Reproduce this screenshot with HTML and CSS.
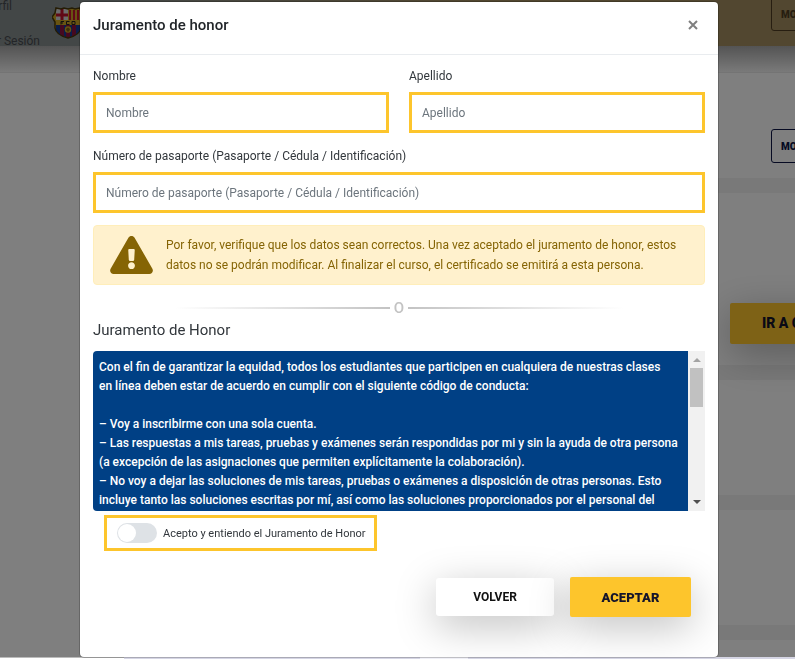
FILE: index.html
```
<!DOCTYPE html>
<html lang="es">
<head>
    <meta charset="UTF-8">
    <meta name="viewport" content="width=device-width, initial-scale=1.0">
    <title>Juramento de honor</title>
    <link rel="stylesheet" href="styles.css">
</head>
<body>
<div class="page">
    <header class="topbar">
        <nav class="topbar-menu">
            <a href="#">Perfil</a>
            <a href="#">Cerrar Sesión</a>
        </nav>
        <svg class="crest" viewBox="0 0 32 32" aria-hidden="true">
            <defs>
                <clipPath id="shield">
                    <path d="M4 1 L9 2 L12 1 L16 2 L20 1 L23 2 L28 1 L29 6 L32 10 L29 15 V21 Q28 28 16 31 Q4 28 3 21 V15 L0 10 L3 6 Z"/>
                </clipPath>
            </defs>
            <g clip-path="url(#shield)">
                <rect width="32" height="32" fill="#d0a824"/>
                <rect x="4" y="2" width="12" height="11" fill="#d8d8d8"/>
                <path d="M8.500 2h3v11h-3zM4 6.500h12v3H4z" fill="#c2122e"/>
                <path d="M17 3h2v10h-2zM21 3h2v10h-2zM25 3h2v10h-2z" fill="#c2122e"/>
                <rect x="4" y="18" width="24" height="13" fill="#143a94"/>
                <path d="M8 18h4v13H8zM14 18h4v13h-4zM20 18h4v13h-4z" fill="#8c1240"/>
                <path d="M9 17.500V14.500h3M9 16h2M17.500 14.500h-3v3h3M20 14.500h3v3h-3z" fill="none" stroke="#222"/>
                <circle cx="16" cy="22.500" r="3.200" fill="#d0a824"/>
                <path d="M16 20.500l2 1.500-1 2.500h-2l-1-2.500z" fill="#7a5c10"/>
            </g>
            <path d="M4 1 L9 2 L12 1 L16 2 L20 1 L23 2 L28 1 L29 6 L32 10 L29 15 V21 Q28 28 16 31 Q4 28 3 21 V15 L0 10 L3 6 Z" fill="none" stroke="#4a3808" stroke-width="1.500"/>
        </svg>
        <button class="outline-btn outline-btn-top" type="button">MOSTRAR</button>
    </header>
    <main class="courses">
        <section class="course course-first">
            <button class="outline-btn" type="button">MOSTRAR</button>
        </section>
        <section class="course course-action">
            <a class="go-btn" href="#">IR A CURSO</a>
        </section>
        <section class="course"></section>
        <section class="course"></section>
        <section class="course"></section>
    </main>
</div>

<div class="backdrop">
    <form class="modal" role="dialog" aria-labelledby="modal-title">
        <div class="modal-header">
            <h1 class="modal-title" id="modal-title">Juramento de honor</h1>
            <button class="close" type="button" aria-label="Cerrar">
                <svg viewBox="0 0 10 10"><path d="M1 1l8 8M9 1l-8 8"/></svg>
            </button>
        </div>
        <div class="modal-body">
            <div class="row">
                <div class="field">
                    <label for="nombre">Nombre</label>
                    <input type="text" id="nombre" placeholder="Nombre">
                </div>
                <div class="field">
                    <label for="apellido">Apellido</label>
                    <input type="text" id="apellido" placeholder="Apellido">
                </div>
            </div>
            <div class="field field-last">
                <label for="pasaporte">Número de pasaporte (Pasaporte / Cédula / Identificación)</label>
                <input type="text" id="pasaporte" placeholder="Número de pasaporte (Pasaporte / Cédula / Identificación)">
            </div>
            <div class="alert">
                <svg class="alert-icon" viewBox="0 0 576 512" aria-hidden="true">
                    <path d="M569.500 440C588 472 564.800 512 527.900 512H48.100c-36.900 0-60-40.100-41.600-72L246.400 24c18.500-32 64.700-32 83.200 0l239.900 416zM288 354c-25.400 0-46 20.600-46 46s20.600 46 46 46 46-20.600 46-46-20.600-46-46-46zm-43.700-165.300l7.400 136c.4 6.400 5.600 11.300 12 11.300h48.500c6.400 0 11.600-5 12-11.300l7.400-136c.4-6.900-5.100-12.700-12-12.700h-63.400c-6.900 0-12.300 5.800-11.900 12.700z"/>
                </svg>
                <p>Por favor, verifique que los datos sean correctos. Una vez aceptado el juramento de honor, estos datos no se podrán modificar. Al finalizar el curso, el certificado se emitirá a esta persona.</p>
            </div>
            <div class="divider"><span>O</span></div>
            <h2 class="oath-title">Juramento de Honor</h2>
            <div class="oath">
                <div class="oath-text">
                    Con el fin de garantizar la equidad, todos los estudiantes que participen en cualquiera de nuestras clases<br>
                    en línea deben estar de acuerdo en cumplir con el siguiente código de conducta:<br><br>
                    – Voy a inscribirme con una sola cuenta.<br>
                    – Las respuestas a mis tareas, pruebas y exámenes serán respondidas por mi y sin la ayuda de otra persona<br>
                    (a excepción de las asignaciones que permiten explícitamente la colaboración).<br>
                    – No voy a dejar las soluciones de mis tareas, pruebas o exámenes a disposición de otras personas. Esto<br>
                    incluye tanto las soluciones escritas por mí, así como las soluciones proporcionados por el personal del
                </div>
                <div class="scrollbar" aria-hidden="true">
                    <span class="arrow arrow-up"></span>
                    <span class="thumb"></span>
                    <span class="arrow arrow-down"></span>
                </div>
            </div>
            <label class="accept">
                <input type="checkbox" class="switch">
                Acepto y entiendo el Juramento de Honor
            </label>
            <div class="actions">
                <button class="btn btn-back" type="button">VOLVER</button>
                <button class="btn btn-accept" type="submit">ACEPTAR</button>
            </div>
        </div>
    </form>
</div>
<div class="taskbar">
    <span class="taskbar-status"></span>
    <span class="taskbar-tab"></span>
</div>
</body>
</html>
```

FILE: styles.css
```
* {
    box-sizing: border-box;
}

body {
    margin: 0;
    height: 100vh;
    overflow: hidden;
    font-family: Roboto, "Liberation Sans", sans-serif;
    font-size: 12px;
    color: #32373c;
    display: flex;
    flex-direction: column;
}

h1, h2, p {
    margin: 0;
    font-weight: 400;
}

button, input {
    font-family: inherit;
}

/* page behind the modal */
.page {
    flex: 1;
    min-height: 0;
    overflow: hidden;
    background: #fff;
}

.topbar {
    display: flex;
    height: 46px;
    background: linear-gradient(90deg, #868e8e 0, #868e8e 100px, #a48f60 60%, #a48f60);
}

.topbar-menu {
    width: 52px;
    display: flex;
    flex-direction: column;
    align-items: flex-end;
    gap: 15px;
    padding-right: 12px;
}

.topbar-menu a {
    color: #474b50;
    line-height: 20px;
    white-space: nowrap;
    text-decoration: none;
}

.topbar-menu a:first-child {
    margin-top: -4px;
    padding-right: 28px;
}

.crest {
    width: 32px;
    height: 32px;
    margin-top: 7px;
}

.outline-btn {
    width: 80px;
    height: 34px;
    margin-left: auto;
    margin-right: -56px;
    padding: 0 9px;
    border: 1px solid #0c1445;
    border-radius: 3px;
    background: none;
    color: #0c1445;
    font-size: 10px;
    font-weight: 900;
    text-align: left;
    flex-shrink: 0;
}

.outline-btn-top {
    margin-top: -3px;
    border-color: #4f3d22;
    color: #4f3d22;
}

.courses {
    background: linear-gradient(#a8a8a8, #f4f4f4 26px, #e8e8e8 26px, #e8e8e8 27px, #fff 27px);
}

.course {
    display: flex;
    height: 130px;
    margin-left: 50%;
    border-bottom: 15px solid #f3f3f3;
}

.course-first {
    height: 147px;
    padding-top: 83px;
}

.course-action {
    height: 187px;
    padding-top: 110px;
}

.go-btn {
    width: 130px;
    height: 41px;
    margin-left: auto;
    margin-right: -65px;
    padding-left: 32px;
    background: #fdc52c;
    border-radius: 2px;
    box-shadow: 0 10px 40px rgba(0, 0, 0, .3);
    color: #15152b;
    font-size: 14px;
    font-weight: 900;
    line-height: 41px;
    text-decoration: none;
    white-space: nowrap;
}

.taskbar {
    display: flex;
    height: 2px;
    background: #d5d5e4;
}

.taskbar-status {
    width: 124px;
    background: #fff;
    border-top: 1px solid #bbb;
}

.taskbar-tab {
    width: 48px;
    margin-left: 296px;
    background: #efeff6;
}

/* modal */
.backdrop {
    position: fixed;
    inset: 0 0 2px;
    padding: 2px 77px 0 80px;
    background: rgba(0, 0, 0, .5);
}

.modal {
    background: #fff;
    border-radius: 4px;
    box-shadow: 0 0 0 1px rgba(0, 0, 0, .2);
    overflow: hidden;
}

.modal-header {
    display: flex;
    justify-content: space-between;
    align-items: center;
    height: 53px;
    padding: 0 18px 6px 13px;
    border-bottom: 1px solid #e9ecef;
}

.modal-title {
    font-size: 15px;
    font-weight: 500;
    line-height: 22px;
    color: #212529;
}

.close {
    width: 14px;
    height: 14px;
    padding: 2px;
    border: 0;
    background: none;
    display: flex;
}

.close svg {
    width: 10px;
    height: 10px;
    stroke: #7f7f7f;
    stroke-width: 2;
}

.modal-body {
    padding: 11px 13px 40px;
}

.row {
    display: flex;
    gap: 20px;
}

.field {
    flex: 1;
    margin-bottom: 13px;
}

.field-last {
    margin-bottom: 12px;
}

.field label {
    display: block;
    margin-bottom: 6px;
    line-height: 20px;
}

.field input {
    display: block;
    width: 100%;
    height: 41px;
    padding: 0 10px;
    border: 3px solid #fdc52c;
    background: #fff;
    font-size: 12px;
    color: #495057;
}

.field input::placeholder {
    color: #6c757d;
}

.alert {
    display: flex;
    align-items: center;
    gap: 13px;
    padding: 9px 16px;
    border: 1px solid #ffeeba;
    border-radius: 4px;
    background: #fff1cd;
    color: #856404;
    line-height: 20px;
}

.alert-icon {
    flex-shrink: 0;
    width: 43px;
    height: 38px;
    fill: #856404;
}

.divider {
    display: flex;
    align-items: center;
    gap: 4px;
    margin: 12px 82px 0;
    height: 22px;
    color: #c3c3c3;
    font-size: 15px;
    font-weight: 500;
}

.divider::before,
.divider::after {
    content: "";
    flex: 1;
    height: 2px;
    background: linear-gradient(90deg, #fff, #c3c3c3);
}

.divider::after {
    background: linear-gradient(90deg, #c3c3c3, #fff);
}

.oath-title {
    margin-bottom: 10px;
    font-size: 15px;
    line-height: 22px;
}

.oath {
    display: flex;
    height: 160px;
    border-radius: 4px 0 0 4px;
    overflow: hidden;
}

.oath-text {
    flex: 1;
    padding: 7px 6px;
    background: #004085;
    color: #fff;
    font-size: 12px;
    font-weight: 500;
    line-height: 19px;
}

.scrollbar {
    display: flex;
    flex-direction: column;
    align-items: center;
    width: 17px;
    background: #f1f1f1;
}

.arrow {
    margin: 7px 0 6px;
    border: 4px solid transparent;
    border-top-width: 0;
    border-bottom: 4px solid #a3a3a3;
}

.arrow-down {
    margin: auto 0 7px;
    border-top: 4px solid #505050;
    border-bottom-width: 0;
}

.thumb {
    width: 13px;
    height: 39px;
    background: #c1c1c1;
}

.accept {
    display: inline-flex;
    align-items: center;
    gap: 6px;
    height: 36px;
    margin: 4px 0 0 11px;
    padding: 0 8px 0 10px;
    border: 3px solid #fdc52c;
    font-size: 11px;
}

.switch {
    appearance: none;
    width: 40px;
    height: 20px;
    margin: 0;
    padding: 1px;
    border-radius: 10px;
    background: #dee2e6;
}

.switch::before {
    content: "";
    display: block;
    width: 18px;
    height: 18px;
    border-radius: 50%;
    background: #fff;
}

.switch:checked {
    background: #004085;
}

.switch:checked::before {
    margin-left: auto;
}

.actions {
    display: flex;
    justify-content: flex-end;
    align-items: center;
    gap: 16px;
    margin-top: 26px;
    padding-right: 14px;
}

.btn {
    border: 0;
    box-shadow: 0 10px 40px rgba(0, 0, 0, .25);
    cursor: pointer;
}

.btn-back {
    width: 118px;
    height: 38px;
    border-radius: 3px;
    background: #fff;
    color: #111;
    font-size: 12px;
    font-weight: 700;
}

.btn-accept {
    width: 121px;
    height: 40px;
    border-radius: 2px;
    background: #fdc52c;
    color: #15152b;
    font-size: 13px;
    font-weight: 900;
}
```
